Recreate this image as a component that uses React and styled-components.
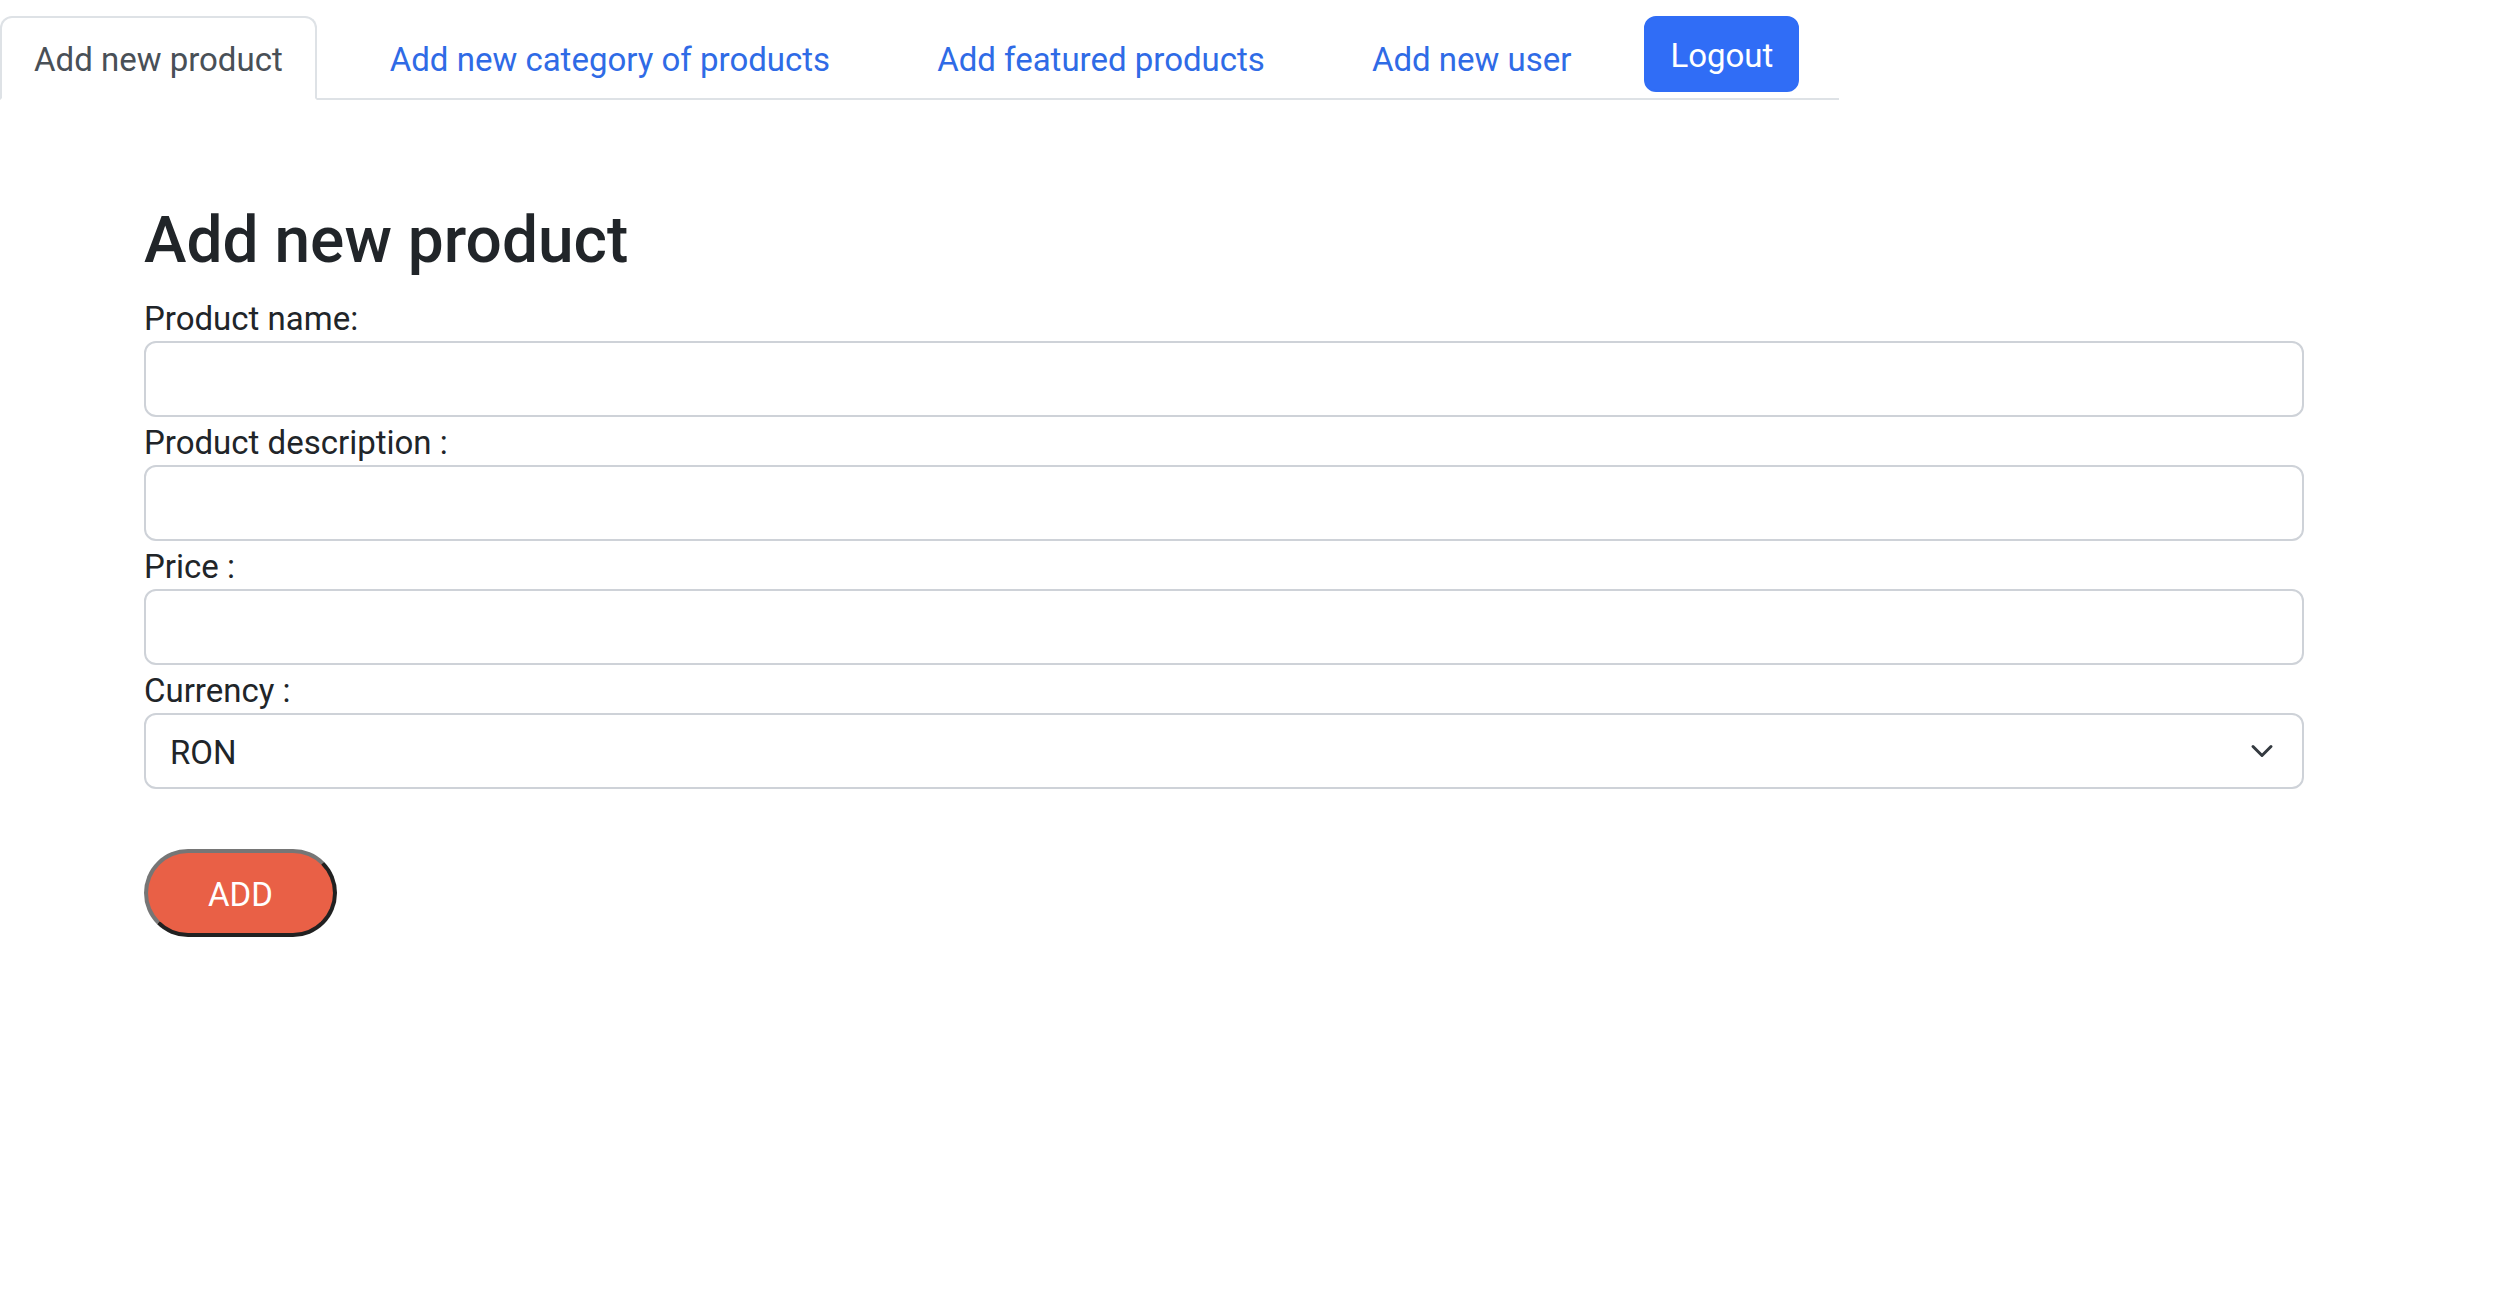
import React, { useState } from 'react';
import styled, { createGlobalStyle } from 'styled-components';

const GlobalStyle = createGlobalStyle`
  *, *::before, *::after { box-sizing: border-box; }
  body {
    margin: 0;
    background: #fff;
    color: #212529;
    font-family: Roboto, "Liberation Sans", sans-serif;
    font-size: 33px;
    font-weight: 400;
    line-height: 44px;
  }
`;

const Nav = styled.nav`
  display: flex;
  align-items: flex-start;
  gap: 39px;
  width: fit-content;
  margin-top: 16px;
  padding-right: 40px;
  box-shadow: inset 0 -2px #dee2e6;
`;

const Tab = styled.a`
  padding: 20px 32px 16px;
  border: 2px solid;
  border-color: ${({ $active }) => ($active ? '#dee2e6 #dee2e6 #fff' : 'transparent')};
  border-radius: 12px 12px 0 0;
  background: ${({ $active }) => ($active ? '#fff' : 'transparent')};
  color: ${({ $active }) => ($active ? '#495057' : '#2f6be6')};
  text-decoration: none;
  white-space: nowrap;
`;

const LogoutButton = styled.button`
  padding: 16px 24px 12px;
  border: 2px solid #306df6;
  border-radius: 12px;
  background: #306df6;
  color: #fff;
  font: inherit;
  cursor: pointer;
`;

const Main = styled.main`
  padding: 100px 204px 100px 144px;
`;

const Title = styled.h2`
  margin: 0 0 16px;
  padding-top: 4px;
  font-size: 64px;
  font-weight: 500;
  line-height: 73px;
`;

const Form = styled.form`
  display: flex;
  flex-direction: column;
`;

const Label = styled.label`
  padding-top: 4px;
`;

const Input = styled.input`
  width: 100%;
  height: 76px;
  padding: 16px 24px 12px;
  border: 2px solid #ced2d8;
  border-radius: 12px;
  background: #fff;
  color: inherit;
  font: inherit;
`;

const SelectBox = styled.div`
  display: grid;
  align-items: center;

  > * { grid-area: 1 / 1; }
`;

const Select = styled(Input).attrs({ as: 'select' })`
  padding-right: 72px;
  appearance: none;
`;

const Chevron = styled.svg`
  justify-self: end;
  width: 24px;
  height: 24px;
  margin-right: 30px;
  pointer-events: none;
`;

const AddButton = styled.button`
  align-self: flex-start;
  margin-top: 60px;
  padding: 18px 60px 14px;
  border: 4px solid;
  border-color: #767676 #212121 #212121 #767676;
  border-radius: 50px;
  background: #e96046;
  color: #fff;
  font: inherit;
  line-height: 48px;
  cursor: pointer;
`;

const tabs = ['Add new product', 'Add new category of products', 'Add featured products', 'Add new user'];

const fields = [
  { id: 'name', label: 'Product name:' },
  { id: 'description', label: 'Product description :' },
  { id: 'price', label: 'Price :' },
];

export default function App() {
  const [active, setActive] = useState(0);

  return (
    <>
      <GlobalStyle />
      <Nav>
        {tabs.map((tab, i) => (
          <Tab key={tab} href="#" $active={i === active} onClick={() => setActive(i)}>
            {tab}
          </Tab>
        ))}
        <LogoutButton type="button">Logout</LogoutButton>
      </Nav>
      <Main>
        <Title>Add new product</Title>
        <Form onSubmit={(e) => e.preventDefault()}>
          {fields.map(({ id, label }) => (
            <React.Fragment key={id}>
              <Label htmlFor={id}>{label}</Label>
              <Input id={id} type="text" />
            </React.Fragment>
          ))}
          <Label htmlFor="currency">Currency :</Label>
          <SelectBox>
            <Select id="currency">
              <option>RON</option>
              <option>EUR</option>
              <option>USD</option>
            </Select>
            <Chevron viewBox="0 0 16 16" aria-hidden="true">
              <path d="m2 5 6 6 6-6" fill="none" stroke="#343a40" strokeWidth="2" strokeLinecap="round" strokeLinejoin="round" />
            </Chevron>
          </SelectBox>
          <AddButton type="submit">ADD</AddButton>
        </Form>
      </Main>
    </>
  );
}
